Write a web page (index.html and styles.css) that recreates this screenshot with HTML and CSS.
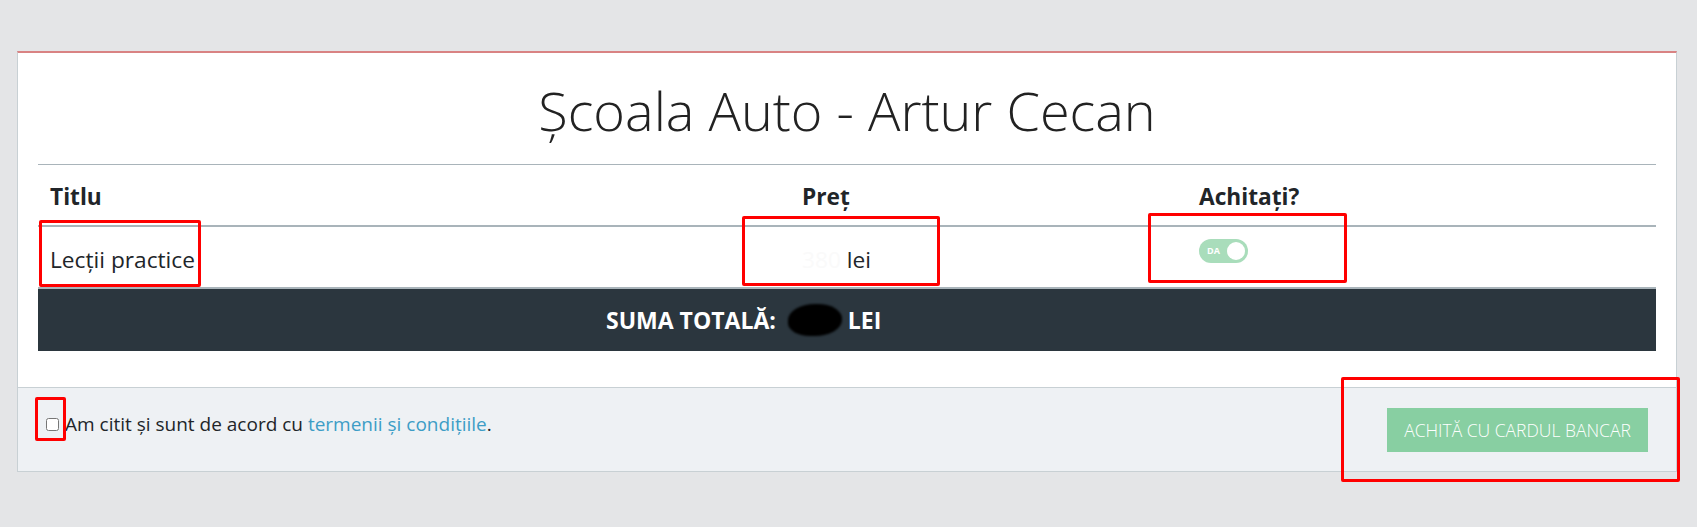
FILE: index.html
```html
<!DOCTYPE html>
<html lang="ro">
<head>
  <meta charset="UTF-8">
  <meta name="viewport" content="width=device-width, initial-scale=1.0">
  <title>Școala Auto - Plată</title>
  <link rel="stylesheet" href="styles.css">
</head>
<body>
  <div class="page">
    <div class="card">
      <div class="card-body">
        <h1 class="title">Școala Auto - Artur Cecan</h1>
        <table class="lessons">
          <colgroup>
            <col class="col-title">
            <col class="col-price">
            <col>
          </colgroup>
          <thead>
            <tr>
              <th>Titlu</th>
              <th>Preț</th>
              <th>Achitați?</th>
            </tr>
          </thead>
          <tbody>
            <tr>
              <td>Lecții practice</td>
              <td><span class="hidden-sum">380</span> lei</td>
              <td><span class="switch"><span class="switch-label">DA</span></span></td>
            </tr>
          </tbody>
          <tfoot>
            <tr>
              <td colspan="3">
                <div class="total">SUMA TOTALĂ: <span class="blot"></span> LEI</div>
              </td>
            </tr>
          </tfoot>
        </table>
      </div>
      <div class="card-footer">
        <label class="agree">
          <input type="checkbox" id="agree">
          <span>Am citit și sunt de acord cu <a href="#">termenii și condițiile</a>.</span>
        </label>
        <button type="button" class="pay" disabled>Achită cu cardul bancar</button>
      </div>
    </div>
  </div>

  <!-- annotation boxes -->
  <div class="mark mark-title"></div>
  <div class="mark mark-price"></div>
  <div class="mark mark-paid"></div>
  <div class="mark mark-pay"></div>
  <div class="mark mark-check"></div>
</body>
</html>
```

FILE: styles.css
```css
body {
  font-family: "Open Sans", "Noto Sans", sans-serif;
  margin: 0;
  padding: 0;
  background-color: #e4e5e7;
  color: #212529;
  position: relative;
  height: 527px;
  overflow: hidden;
}
.page {
  padding: 51px 20px 0 17px;
}
.card {
  background: #fff;
  border: 1px solid #c8d0d4;
  border-top: 2px solid #d98383;
}
.card-body {
  padding: 25px 20px 36px;
}
.title {
  margin: 0 0 21px;
  font-size: 54px;
  font-weight: 300;
  line-height: 65px;
  text-align: center;
  color: #222;
}
.lessons {
  width: 100%;
  border-collapse: collapse;
  table-layout: fixed;
  font-size: 22.7px;
  line-height: 30px;
}
.col-title {
  width: 752px;
}
.col-price {
  width: 397px;
}
.lessons th {
  text-align: left;
  font-weight: 700;
  padding: 17px 12px 13px;
  border-top: 1px solid #a9b4ba;
  border-bottom: 2px solid #a9b4ba;
}
.lessons td {
  padding: 18px 12px 12px;
  vertical-align: top;
}
.lessons tbody td {
  border-bottom: 2px solid #a9b4ba;
}
.hidden-sum {
  color: #fafafa;
}
.switch {
  display: inline-block;
  position: relative;
  width: 49px;
  height: 24px;
  margin-top: -6px;
  border-radius: 12px;
  background: #a9ddbb;
  vertical-align: top;
}
.switch-label {
  position: absolute;
  left: 8px;
  top: 0;
  font-size: 9px;
  font-weight: 700;
  line-height: 24px;
  color: #fff;
}
.switch::after {
  content: "";
  position: absolute;
  right: 3px;
  top: 3px;
  width: 18px;
  height: 18px;
  border-radius: 50%;
  background: #fff;
}
.lessons tfoot td {
  background: #2b363e;
  color: #fff;
  padding: 15px 12px;
}
.total {
  padding-left: 556px;
  font-weight: 700;
  font-size: 23px;
  display: flex;
  align-items: center;
}
.blot {
  display: inline-block;
  width: 54px;
  height: 32px;
  margin: 0 6px 0 12px;
  border-radius: 50% 45% 50% 40%;
  background: #000;
  filter: blur(1px);
}
.card-footer {
  background: #eef1f4;
  border-top: 1px solid #c8d0d4;
  padding: 20px 28px 19px;
  display: flex;
  justify-content: space-between;
  align-items: center;
}
.agree {
  display: flex;
  align-items: center;
  font-size: 19px;
  line-height: 30px;
  margin-bottom: 12px;
}
.agree input {
  width: 13px;
  height: 13px;
  margin: 0 6px 0 0;
}
.agree a {
  color: #3d9dc6;
  text-decoration: none;
}
.pay {
  width: 261px;
  height: 44px;
  background: #88cfa2;
  color: #fff;
  border: none;
  border-radius: 0;
  font-family: "Open Sans", sans-serif;
  font-weight: 300;
  font-size: 17.5px;
  text-transform: uppercase;
  padding: 0;
}
.mark {
  position: absolute;
  box-sizing: border-box;
  border: 3px solid #f00;
  border-radius: 2px;
}
.mark-title {
  left: 39px;
  top: 220px;
  width: 162px;
  height: 67px;
}
.mark-price {
  left: 742px;
  top: 216px;
  width: 198px;
  height: 70px;
}
.mark-paid {
  left: 1148px;
  top: 213px;
  width: 199px;
  height: 70px;
}
.mark-pay {
  left: 1341px;
  top: 377px;
  width: 339px;
  height: 105px;
}
.mark-check {
  left: 35px;
  top: 397px;
  width: 31px;
  height: 44px;
}
```
